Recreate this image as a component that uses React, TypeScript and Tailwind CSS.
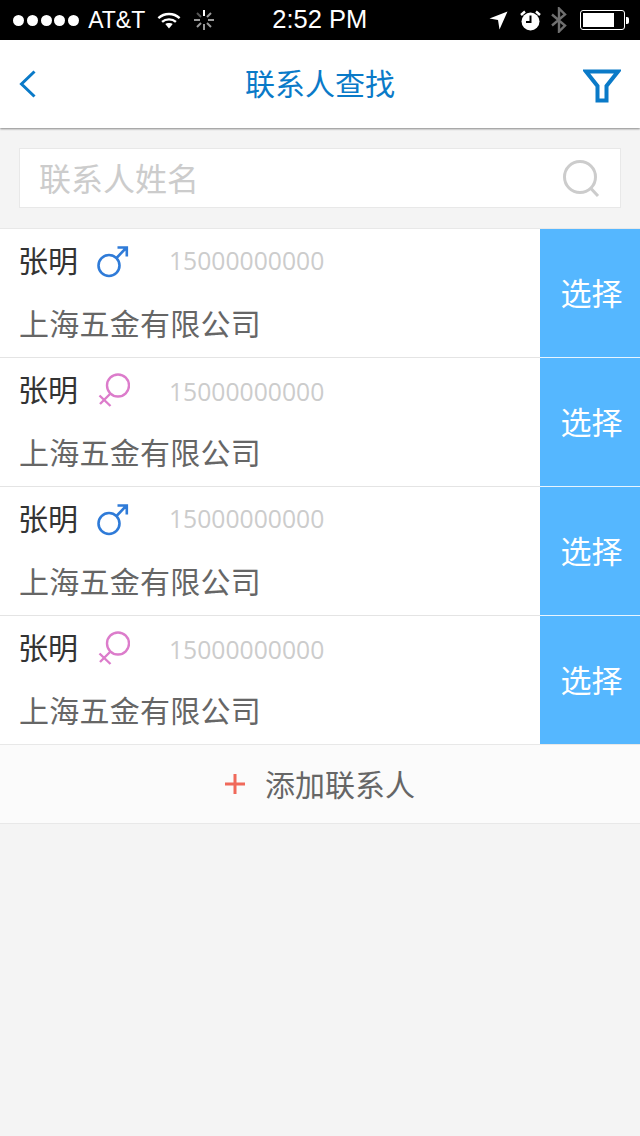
const cjk = "font-['Noto_Sans_CJK_SC',sans-serif]";

function MaleIcon() {
  return (
    <svg width="34" height="34" viewBox="0 0 34 34" fill="none" stroke="#2f7bd8" strokeWidth="2.6">
      <circle cx="13" cy="20.5" r="10.5" />
      <path d="M20.500 13 30.500 2.500M21.500 2.500h9.300v9" />
    </svg>
  );
}

function FemaleIcon() {
  return (
    <svg width="34" height="34" viewBox="0 0 34 34" fill="none" stroke="#dc7ccb" strokeWidth="2.4">
      <circle cx="22" cy="12.5" r="11" />
      <path d="M14 21 4 31M3.500 22.500l11 10.500" />
    </svg>
  );
}

function ContactRow({ female, last }: { female?: boolean; last?: boolean }) {
  return (
    <div className={`flex bg-white ${last ? "h-[128px]" : "h-[129px] border-b border-[#e4e4e4]"}`}>
      <div className="flex-1 min-w-0">
        <div className="flex h-[64px] items-center pl-[18px] pb-[3px]">
          <span className={`${cjk} -mt-[1px] text-[30px] leading-[40px] text-[#333333]`}>张明</span>
          <span className={`ml-[18px] ${female ? "mt-[2px]" : "mt-[5px]"}`}>
            {female ? <FemaleIcon /> : <MaleIcon />}
          </span>
          <span className={`ml-[39px] font-['Open_Sans',sans-serif] text-[24.700px] leading-[32px] text-[#cccccc] ${female ? "mt-[7px]" : "mt-[3px]"}`}>
            15000000000
          </span>
        </div>
        <div className={`${cjk} pl-[19px] pt-[9px] text-[30px] leading-[40px] tracking-[0.25px] text-[#666666]`}>上海五金有限公司</div>
      </div>
      <button className={`${cjk} w-[100px] bg-[#55b7ff] pl-[3px] pb-[2px] text-[31px] text-white ${last ? "" : "-mb-px border-b border-[#e8f5ff]"}`}>
        选择
      </button>
    </div>
  );
}

export default function App() {
  return (
    <div className="flex min-h-[1136px] w-[640px] flex-col bg-[#f4f4f4]">
      {/* status bar */}
      <div className="flex h-[40px] items-center bg-black pl-[13px] pr-[11px] text-white font-['Liberation_Sans',sans-serif]">
        <div className="flex gap-[2.800px]">
          {[0, 1, 2, 3, 4].map((i) => (
            <span key={i} className="h-[11px] w-[11px] rounded-full bg-white" />
          ))}
        </div>
        <span className="ml-[9px] text-[23px] leading-none">AT&amp;T</span>
        <svg className="ml-[12px]" width="24" height="19" viewBox="0 0 26 20" fill="none" stroke="#fff" strokeWidth="2.600">
          <path d="M1.500 7.500c6.500-6 16.500-6 23 0M5.500 11.500c4-3.600 11-3.600 15 0" />
          <path d="M9 13.800c2-1.500 6-1.500 8 0l-4 5z" fill="#fff" stroke="none" />
        </svg>
        <svg className="ml-[13px]" width="20" height="20" viewBox="0 0 20 20" stroke="#9a9a9a" strokeWidth="2">
          <path d="M10 0v6" stroke="#fff" />
          <path d="M17 3l-4 4M20 10h-6M17 17l-4-4M10 20v-6M3 17l4-4M0 10h6" />
          <path d="M3 3l4 4" stroke="#555" />
        </svg>
        <span className="ml-[58px] text-[25.500px] leading-none">2:52 PM</span>
        <svg className="ml-auto" width="19" height="19" viewBox="0 0 19 19" fill="#fff">
          <path d="M18.500.500 10.500 18.500l-1.500-9.500L.500 7.500z" />
        </svg>
        <svg className="ml-[12px]" width="21" height="21" viewBox="0 0 21 21">
          <circle cx="10.500" cy="11.500" r="9" fill="#fff" />
          <path d="M10.500 5.500v6.500H6" fill="none" stroke="#000" strokeWidth="2" />
          <path d="M1 5l4-3.500M20 5l-4-3.500" stroke="#fff" strokeWidth="2.400" />
        </svg>
        <svg className="ml-[10px]" width="16" height="26" viewBox="0 0 16 26" fill="none" stroke="#6f6f6f" strokeWidth="2.400">
          <path d="M1 7.500 14 18.500 8 24.500V1.500l6 6L1 18.500" />
        </svg>
        <div className="ml-[13px] flex items-center">
          <div className="h-[20px] w-[45px] rounded-[3px] border border-white p-[2px]">
            <div className="h-full w-[31px] bg-white" />
          </div>
          <div className="ml-[1px] h-[7px] w-[3px] rounded-r-[2px] bg-white" />
        </div>
      </div>

      {/* nav */}
      <div className="relative flex h-[88px] items-center justify-between bg-white pl-[19px] pr-[19px] shadow-[0_1px_2px_rgba(0,0,0,0.45)]">
        <div className="w-[38px]">
          <svg width="18" height="28" viewBox="0 0 18 28" fill="none" stroke="#0a7ac8" strokeWidth="3">
            <path d="M15.500 1.500 2.500 14l13 12.500" />
          </svg>
        </div>
        <span className={`${cjk} pb-[4px] text-[30px] leading-[40px] text-[#0a7ac8]`}>联系人查找</span>
        <svg className="mt-[3px]" width="38" height="34" viewBox="0 0 38 34" fill="none" stroke="#0a7ac8" strokeWidth="4">
          <path d="M3 2.500h32L23.500 17v14.500h-9V17z" strokeLinejoin="miter" />
        </svg>
      </div>

      {/* search */}
      <div className="px-[19px] pb-[20px] pt-[20px]">
        <div className="flex h-[60px] items-center border border-[#e8e8e8] bg-white pl-[19px] pr-[20px]">
          <span className={`${cjk} flex-1 pb-[2px] text-[32px] leading-[40px] text-[#cccccc]`}>联系人姓名</span>
          <svg width="37" height="37" viewBox="0 0 37 37" fill="none" stroke="#cccccc" strokeWidth="3">
            <circle cx="17" cy="17" r="15.500" />
            <path d="M27.500 28 35 36" />
          </svg>
        </div>
      </div>

      {/* contacts */}
      <div className="border-t border-[#e8e8e8]">
        <ContactRow />
        <ContactRow female />
        <ContactRow />
        <ContactRow female last />
      </div>

      {/* add */}
      <div className="flex h-[80px] items-center justify-center border-y border-[#e8e8e8] bg-[#fbfbfb]">
        <svg width="20" height="20" viewBox="0 0 20 20" fill="none" stroke="#f0695a" strokeWidth="3">
          <path d="M10 0v20M0 10h20" />
        </svg>
        <span className={`${cjk} ml-[20px] pb-[2px] text-[30px] leading-[40px] text-[#666666]`}>添加联系人</span>
      </div>
    </div>
  );
}
